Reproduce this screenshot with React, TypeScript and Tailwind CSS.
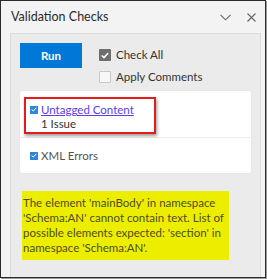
import React from 'react';

const font = { fontFamily: 'Lato, "Noto Sans", sans-serif' };

const App: React.FC = () => {
  return (
    <div className="w-[267px] h-[279px] bg-white" style={font}>
      <div className="w-[266px] h-[278px] border border-[#2b2b2b] bg-[#f3f3f3] flex flex-col shadow-[1px_1px_0_#9a9a9a]">
        <div className="h-[32px] flex items-center justify-between pl-[10px] pr-[9px] pt-[1px]">
          <span className="text-[12.5px] text-[#2b2b2b]">Validation Checks</span>
          <div className="flex items-center gap-[16px] text-[#666]">
            <svg width="11" height="7" viewBox="0 0 11 7" fill="none" stroke="currentColor" strokeWidth="1.1">
              <path d="M0.5 0.8 L5.5 5.8 L10.5 0.8" />
            </svg>
            <svg width="9" height="9" viewBox="0 0 9 9" fill="none" stroke="currentColor" strokeWidth="1.1">
              <path d="M0.5 0.5 L8.5 8.5 M8.5 0.5 L0.5 8.5" />
            </svg>
          </div>
        </div>
        <div className="flex-1 mx-[9px] mr-[4px] bg-[#ebebeb] border border-[#dcdcdc] border-b-0 pl-[9px] pr-[9px] pt-[9px]">
          <div className="flex">
            <button className="w-[62px] h-[25px] bg-[#0078d7] text-white text-[11.5px] font-bold">Run</button>
            <div className="ml-[17px] flex flex-col gap-[10px] pt-[6px]">
              <label className="flex items-center gap-[5px] text-[11.5px] text-[#333] leading-[12px]">
                <span className="w-[12px] h-[12px] bg-[#6e6e6e] rounded-[1px] flex items-center justify-center">
                  <svg width="8" height="7" viewBox="0 0 8 7" fill="none" stroke="white" strokeWidth="1.5">
                    <path d="M0.8 3.5 L3 5.6 L7.2 1" />
                  </svg>
                </span>
                Check All
              </label>
              <label className="flex items-center gap-[5px] text-[11.5px] text-[#333] leading-[12px]">
                <span className="w-[12px] h-[12px] bg-[#f7f7f7] border border-[#c8c8c8] rounded-[1px]" />
                Apply Comments
              </label>
            </div>
          </div>
          <div className="mt-[8px] bg-white rounded-[2px] shadow-[0_0_1px_#cfcfcf]">
            <div className="h-[47px] border-b border-[#ececec] pt-[6px] pl-[4px]">
              <div className="w-[132px] h-[37px] border-2 border-[#e31b1b] shadow-[1px_2px_3px_#9a9a9a] pl-[4px] pt-[3px] flex flex-col">
                <div className="flex items-center gap-[3px] h-[15px] whitespace-nowrap">
                  <span className="w-[8px] h-[8px] bg-[#2f86db] flex items-center justify-center">
                    <svg width="6" height="5" viewBox="0 0 6 5" fill="none" stroke="white" strokeWidth="1">
                      <path d="M0.6 2.6 L2.3 4 L5.4 0.8" />
                    </svg>
                  </span>
                  <span className="text-[11.5px] leading-[15px] text-[#5a3cf0] underline">Untagged Content</span>
                </div>
                <div className="pl-[11px] text-[11.5px] text-[#333] leading-[14px]">1 Issue</div>
              </div>
            </div>
            <div className="h-[35px] flex items-center gap-[3px] pl-[10px]">
              <span className="w-[8px] h-[8px] bg-[#2f86db] flex items-center justify-center">
                <svg width="6" height="5" viewBox="0 0 6 5" fill="none" stroke="white" strokeWidth="1">
                  <path d="M0.6 2.6 L2.3 4 L5.4 0.8" />
                </svg>
              </span>
              <span className="text-[11.5px] text-[#555]">XML Errors</span>
            </div>
          </div>
          <div className="mt-[18px] ml-[2px] w-[207px] h-[69px] bg-[#eded00] pl-[1px] pt-[4px] text-[11.5px] leading-[15px] text-[#4d4d1a]">
            The element 'mainBody' in namespace 'Schema:AN' cannot contain text. List of possible elements expected: 'section' in namespace 'Schema:AN'.
          </div>
        </div>
      </div>
    </div>
  );
};

export default App;
